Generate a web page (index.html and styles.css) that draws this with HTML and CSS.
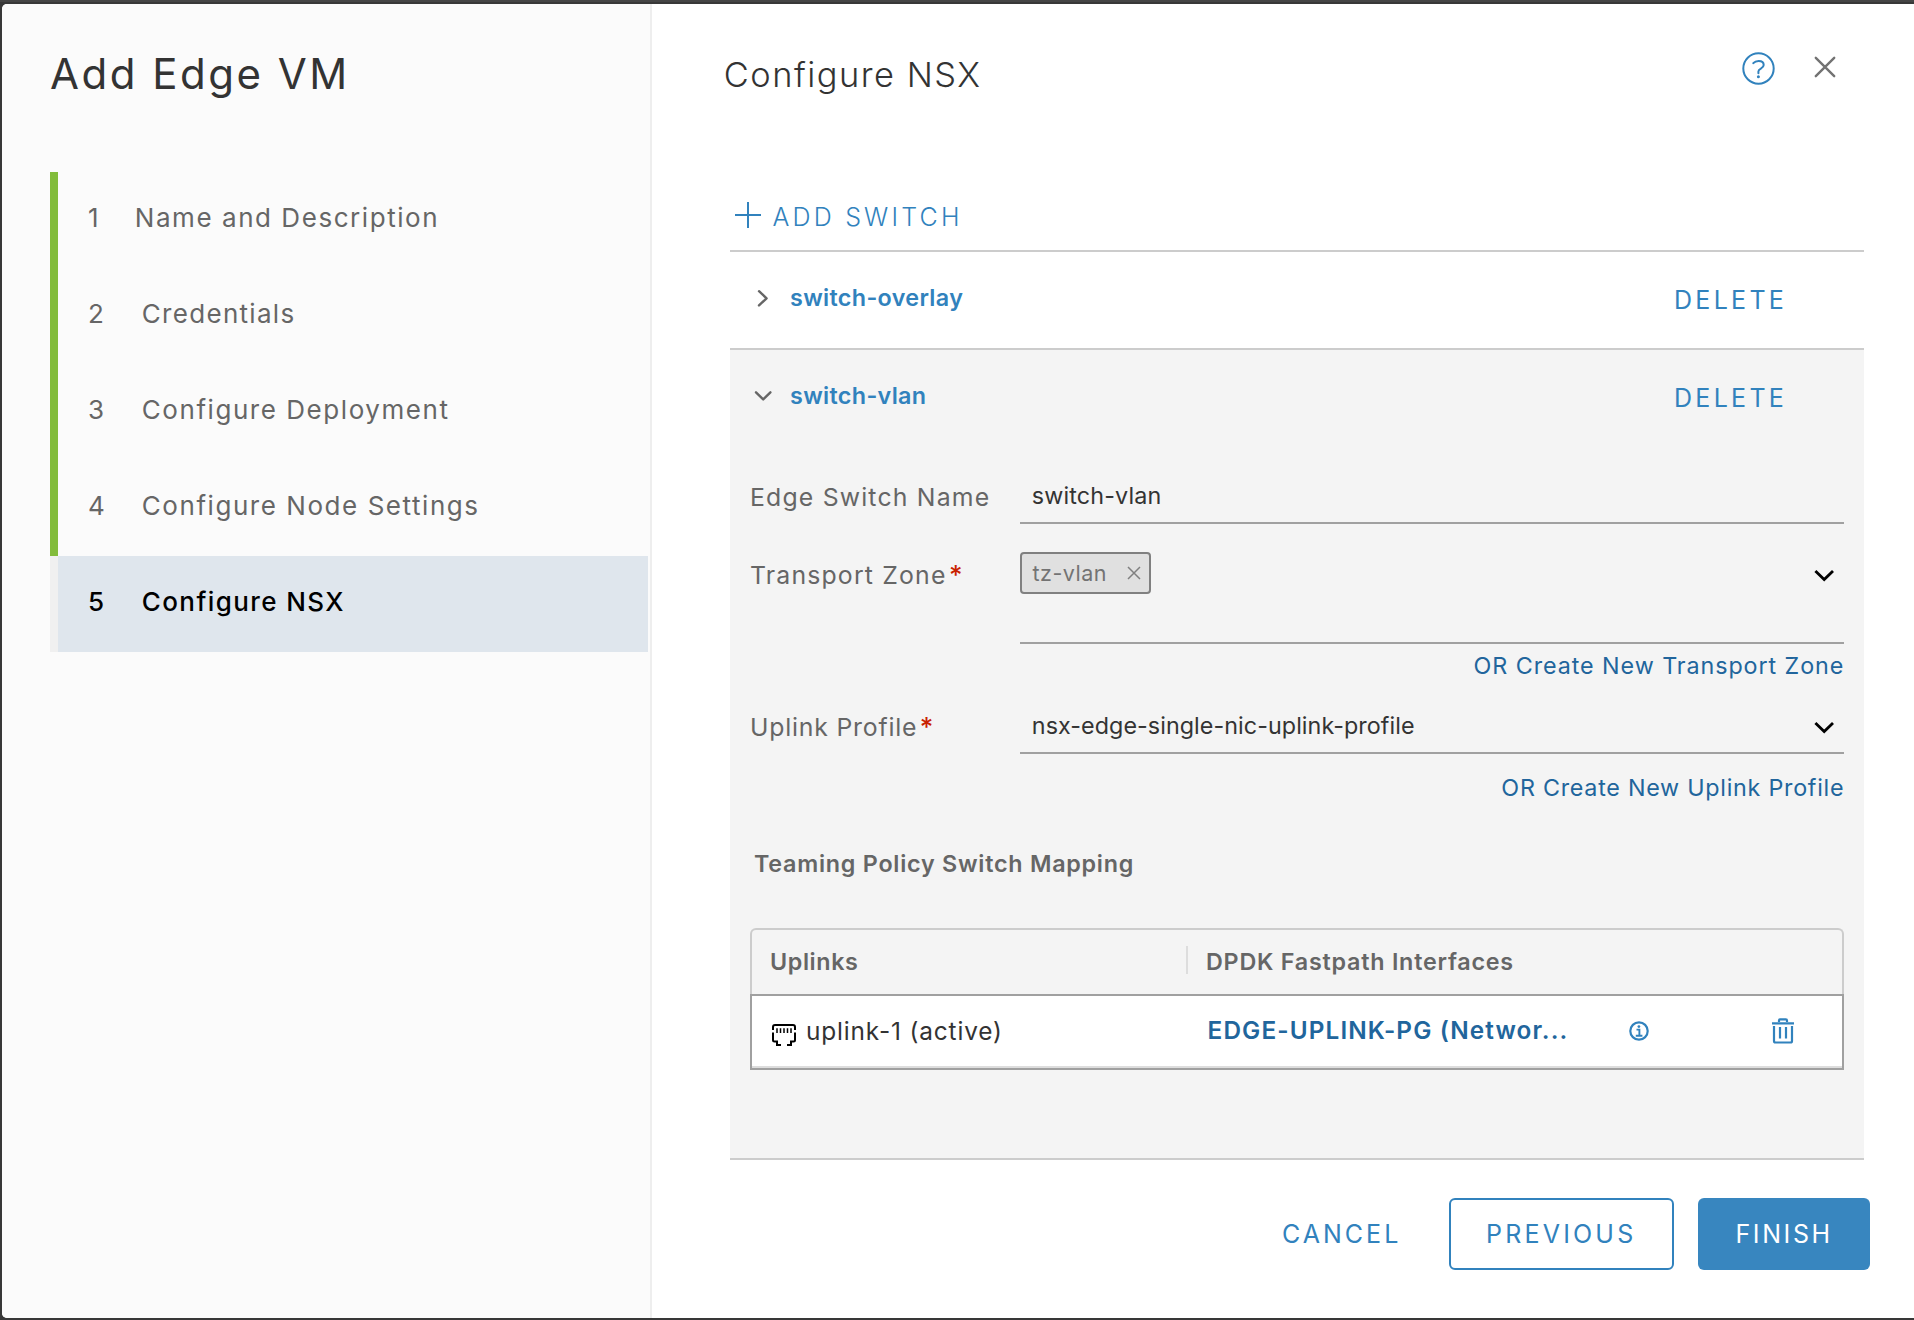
FILE: index.html
```html
<!DOCTYPE html>
<html lang="en">
<head>
<meta charset="utf-8">
<title>Add Edge VM</title>
<link rel="stylesheet" href="styles.css">
</head>
<body>
<div class="dialog">
  <aside class="sidebar">
    <h1 class="wizard-title">Add Edge VM</h1>
    <ol class="steps">
      <li class="step done first"><span class="step-num">1</span><span class="step-label">Name and Description</span></li>
      <li class="step done"><span class="step-num">2</span><span class="step-label tight">Credentials</span></li>
      <li class="step done"><span class="step-num">3</span><span class="step-label">Configure Deployment</span></li>
      <li class="step done"><span class="step-num">4</span><span class="step-label">Configure Node Settings</span></li>
      <li class="step current"><span class="step-num">5</span><span class="step-label">Configure NSX</span></li>
    </ol>
  </aside>

  <main class="main">
    <header class="header">
      <h2 class="page-title">Configure NSX</h2>
      <svg class="help" viewBox="0 0 33 33" fill="none" stroke="#3182bd" stroke-width="2">
        <circle cx="16.5" cy="16.5" r="15.2"/>
        <path d="M11.3 11.2C12.8 9.4 14.6 8.9 16.6 8.9C19.9 8.9 21.7 10.6 21.7 13C21.7 16.8 16.4 16.3 16.4 19.5V21.2" stroke-linecap="round"/>
        <circle cx="16.4" cy="24.8" r="1.5" fill="#3182bd" stroke="none"/>
      </svg>
      <svg class="close" viewBox="0 0 22 22" fill="none" stroke="#737373" stroke-width="2.4" stroke-linecap="round"><path d="M1.8 1.8L20.2 20.2M20.2 1.8L1.8 20.2"/></svg>
    </header>

    <div class="toolbar">
      <svg class="plus" viewBox="0 0 28 28" fill="none" stroke="#3182bd" stroke-width="2"><path d="M1 14H27M14 1V27"/></svg>
      <span class="add-switch">ADD SWITCH</span>
    </div>

    <section class="switch">
      <div class="switch-head">
        <svg class="caret" viewBox="0 0 18 18" fill="none" stroke="#666" stroke-width="2.4" stroke-linecap="round" stroke-linejoin="round"><path d="M5 2.2L12.6 9.3L5 16.4"/></svg>
        <span class="switch-name">switch-overlay</span>
        <span class="delete">DELETE</span>
      </div>
    </section>

    <section class="switch open">
      <div class="switch-head">
        <svg class="caret" viewBox="0 0 18 18" fill="none" stroke="#666" stroke-width="2.4" stroke-linecap="round" stroke-linejoin="round"><path d="M2 5.3L9.2 12.4L16.4 5.3"/></svg>
        <span class="switch-name">switch-vlan</span>
        <span class="delete">DELETE</span>
      </div>

      <div class="form">
        <div class="field name-field">
          <label class="label">Edge Switch Name</label>
          <div class="control"><span class="value">switch-vlan</span></div>
        </div>

        <div class="field zone-field">
          <label class="label">Transport Zone<span class="required">*</span></label>
          <div class="control">
            <span class="chip">tz-vlan<svg class="chip-x" viewBox="0 0 14 14" fill="none" stroke="#808080" stroke-width="1.5"><path d="M1 1L13 13M13 1L1 13"/></svg></span>
            <svg class="arrow" viewBox="0 0 22 22" fill="none" stroke="#000" stroke-width="2.8"><path d="M2.4 6L11.2 14.6L20 6"/></svg>
          </div>
        </div>
        <a class="create zone-link">OR Create New Transport Zone</a>

        <div class="field profile-field">
          <label class="label profile-label">Uplink Profile<span class="required">*</span></label>
          <div class="control">
            <span class="value">nsx-edge-single-nic-uplink-profile</span>
            <svg class="arrow" viewBox="0 0 22 22" fill="none" stroke="#000" stroke-width="2.8"><path d="M2.4 6L11.2 14.6L20 6"/></svg>
          </div>
        </div>
        <a class="create profile-link">OR Create New Uplink Profile</a>

        <h3 class="mapping-title">Teaming Policy Switch Mapping</h3>
        <div class="table">
          <div class="thead">
            <span class="th uplinks-col">Uplinks</span>
            <span class="th">DPDK Fastpath Interfaces</span>
          </div>
          <div class="trow">
            <div class="uplink-cell">
              <svg class="port" viewBox="0 0 24 22" fill="none" stroke="#000" stroke-width="2">
                <path d="M1 6V3Q1 1 3 1H21Q23 1 23 3V6M1 8.5V16Q1 17.5 2.5 17.5H5V21H9M23 8.5V16Q23 17.5 21.5 17.5H19V21H15"/>
                <path d="M5 4.2V9M8.5 4.2V9M12 4.2V9M15.5 4.2V9M19 4.2V9" stroke-width="1.5"/>
              </svg>
              <span class="uplink-name">uplink-1 (active)</span>
            </div>
            <span class="iface">EDGE-UPLINK-PG (Networ...</span>
            <svg class="info" viewBox="0 0 20 20" fill="none" stroke="#3182bd" stroke-width="2.2">
              <circle cx="10" cy="10" r="8.7"/>
              <path d="M7.5 8.6H10.4V14.6M6.8 14.8H13.4" stroke-width="1.9"/>
              <circle cx="9.9" cy="5.6" r="1.4" fill="#3182bd" stroke="none"/>
            </svg>
            <svg class="trash" viewBox="0 0 24 26" fill="none" stroke="#3182bd" stroke-width="2.2">
              <path d="M1 5.3H23M3 8V23Q3 24.5 4.5 24.5H19.5Q21 24.5 21 23V8M8 4V2.6Q8 1.4 9.2 1.4H14.8Q16 1.4 16 2.6V4M9 9V20.5M15 9V20.5"/>
            </svg>
          </div>
        </div>
      </div>
    </section>

    <footer class="footer">
      <button class="btn cancel">CANCEL</button>
      <button class="btn previous">PREVIOUS</button>
      <button class="btn finish">FINISH</button>
    </footer>
  </main>
</div>
</body>
</html>
```
FILE: styles.css
```css
* { box-sizing: border-box; }

body {
  margin: 0;
  height: 1320px;
  padding: 2px 0 2px 2px;
  background: #383838;
  border-top: 2px solid #454545;
  font-family: Inter, "Liberation Sans", sans-serif;
  line-height: 30px;
  color: #333;
  overflow: hidden;
}

svg { display: block; flex: none; }
span, label, a, h1, h2, h3 { white-space: nowrap; }

.dialog {
  display: flex;
  height: 1314px;
  background: #fff;
  border-radius: 5px 0 0 5px;
  overflow: hidden;
}

/* Wizard steps */
.sidebar {
  flex: none;
  width: 650px;
  padding: 45px 2px 0 48px;
  background: #fbfbfb;
  border-right: 2px solid #eee;
}
.wizard-title {
  margin: 0 0 73px;
  font-size: 42px;
  font-weight: 400;
  line-height: 50px;
  letter-spacing: 2.5px;
}
.steps { list-style: none; margin: 0; padding: 0; }
.step {
  display: flex;
  height: 96px;
  padding-left: 30px;
  border-left: 8px solid #f0f0f0;
  font-size: 26px;
  line-height: 91px;
  color: #666;
}
.step.done { border-left-color: #82bc3b; }
.step.current { background: #dfe6ed; color: #000; font-weight: 500; }
.step-num { width: 53.8px; }
.first .step-num { width: 46.8px; }
.step-label { letter-spacing: 1.55px; }
.step-label.tight { letter-spacing: 1.3px; }
.current .step-label { letter-spacing: 1.4px; }

/* Page */
.main { flex: 1; padding: 0 50px 0 78px; }
.header { display: flex; align-items: flex-start; height: 186px; padding-top: 48px; }
.page-title {
  margin: 1px auto 0 -6.2px;
  font-size: 34.4px;
  font-weight: 350;
  line-height: 44px;
  letter-spacing: 1.5px;
}
.help { width: 33px; height: 33px; }
.close { width: 22px; height: 22px; margin: 3.5px 28.5px 0 38.8px; }

.toolbar {
  display: flex;
  align-items: flex-start;
  height: 62px;
  padding: 10.5px 0 0 4px;
  border-bottom: 2px solid #ccc;
}
.plus { width: 28px; height: 28px; margin-right: 10.5px; }
.add-switch {
  margin-top: 1.5px;
  font-size: 25px;
  font-weight: 350;
  letter-spacing: 3.2px;
  color: #3182bd;
}

.switch { border-bottom: 2px solid #ccc; }
.switch-head { display: flex; align-items: flex-start; height: 96px; padding: 30.5px 75px 0 24px; }
.caret { width: 18px; height: 18px; margin: 6.3px 18px 0 0; }
.switch-name {
  margin-right: auto;
  font-size: 23.3px;
  font-weight: 600;
  letter-spacing: .35px;
  color: #3182bd;
}
.delete { margin-top: 2px; font-size: 25px; letter-spacing: 3.3px; margin-right: 1.8px; color: #3182bd; }

.switch.open { height: 810px; background: #f4f4f4; }
.form { display: flex; flex-direction: column; padding: 2px 20px 0; }

.field { display: flex; align-items: stretch; }
.label {
  flex: none;
  width: 270px;
  font-size: 24.8px;
  letter-spacing: 1.18px;
  color: #666;
}
.profile-label { letter-spacing: .8px; }
.required { margin-left: 2.5px; font-weight: 500; font-size: 26px; line-height: 20px; letter-spacing: 0; color: #c92100; }
.control {
  flex: 1;
  display: flex;
  align-items: flex-start;
  justify-content: space-between;
  border-bottom: 2px solid #a0a0a0;
}
.value { padding-left: 11.8px; font-size: 23.3px; letter-spacing: .07px; }
.arrow { width: 22px; height: 22px; margin: 13px 8.6px 0 0; }

.name-field { height: 76px; }
.name-field .label { padding-top: 34px; }
.name-field .value { padding-top: 32.5px; letter-spacing: .15px; }

.zone-field { height: 92px; margin-top: 28px; }
.zone-field .label { padding-top: 8px; }
.chip {
  display: flex;
  align-items: center;
  justify-content: space-between;
  width: 131px;
  height: 42px;
  padding: 0 8px 1px 10.5px;
  border: 2px solid #808080;
  border-radius: 4px;
  background: #e0e0e0;
  font-size: 21.5px;
  letter-spacing: .5px;
  color: #737373;
}
.chip-x { width: 14px; height: 14px; }

.profile-field { height: 44px; margin-top: 29px; }
.profile-field .label { padding-top: 2px; }
.profile-field .value { padding-top: 1px; }
.profile-field .arrow { margin-top: 7px; }

.create { align-self: flex-end; margin-right: -.3px; font-size: 23.3px; color: #21659c; }
.zone-link { margin-top: 7px; letter-spacing: .93px; }
.profile-link { margin-top: 18.5px; letter-spacing: .74px; }

.mapping-title {
  margin: 46px 0 49.5px 4px;
  font-size: 23.3px;
  font-weight: 600;
  letter-spacing: .76px;
  color: #666;
}

.thead {
  display: flex;
  height: 66px;
  padding: 16px 0 20px 18px;
  border: 2px solid #ccc;
  border-bottom: 0;
  border-radius: 6px 6px 0 0;
}
.th { font-size: 23.3px; line-height: 32px; font-weight: 600; letter-spacing: .77px; color: #666; }
.uplinks-col { width: 418px; margin-right: 18px; border-right: 2px solid #ddd; letter-spacing: .6px; }

.trow {
  display: flex;
  align-items: flex-start;
  height: 76px;
  padding: 20px 47px 0 20px;
  border: 2px solid #a0a0a0;
  background: #fff;
  box-shadow: inset 0 -2px #ddd;
}
.uplink-cell { display: flex; width: 435.6px; }
.port { width: 24px; height: 22px; margin: 8px 10px 0 0; }
.uplink-name { font-size: 24.4px; letter-spacing: .85px; }
.iface { width: 421.7px; margin-top: -1.2px; font-size: 24.3px; font-weight: 600; letter-spacing: 1.13px; color: #21659c; }
.info { width: 20px; height: 20px; margin-top: 4.5px; }
.trash { width: 24px; height: 26px; margin: 1.6px 0 0 auto; }

/* Actions */
.footer { display: flex; margin: 38px -6px 0 0; justify-content: flex-end; }
.btn {
  height: 72px;
  padding: 0 0 1px;
  border: 2px solid transparent;
  border-radius: 6px;
  background: none;
  font: 400 25px/30px Inter, "Liberation Sans", sans-serif;
  text-align: left;
  color: #3182bd;
}
.cancel { width: 169px; letter-spacing: 3px; }
.previous { width: 225px; margin-right: 24px; padding-left: 35px; border-color: #3182bd; letter-spacing: 3.2px; }
.finish { width: 172px; padding-left: 35.5px; background: #3886bf; color: #fff; letter-spacing: 2.6px; }
```
